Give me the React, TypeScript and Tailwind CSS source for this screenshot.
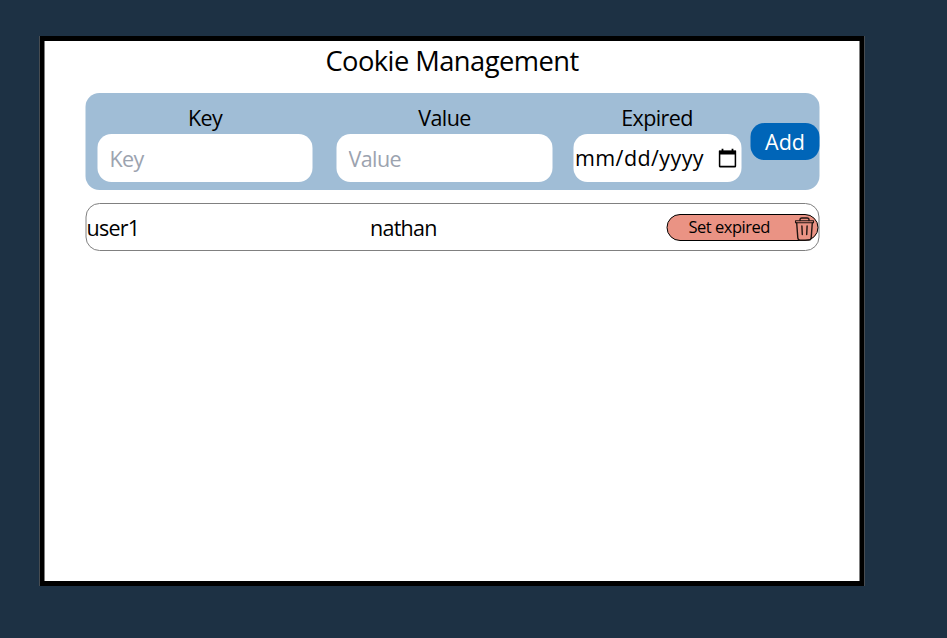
const Calendar = () => (
  <svg className="h-[20px] w-[18px] shrink-0" viewBox="0 0 18 20" fill="none">
    <path d="M1 3.5h16v14.2a1 1 0 0 1-1 1H2a1 1 0 0 1-1-1z" stroke="#000" strokeWidth="1.7" />
    <path d="M0.5 2.5h17v4.1H0.5z" fill="#000" />
    <path d="M4 0.8v3M14 0.8v3" stroke="#000" strokeWidth="1.8" />
  </svg>
);

const Trash = () => (
  <svg
    className="mt-[3px] h-[24px] w-[20px] shrink-0"
    viewBox="0 0 20 24"
    fill="none"
    stroke="#201512"
    strokeWidth="1.4"
    strokeLinecap="round"
    strokeLinejoin="round"
  >
    <path d="M1 3.8h18v2H1z" strokeWidth="1.1" />
    <path d="M5.5 3.6V2.8Q5.5 1 7.3 1h5.4q1.8 0 1.8 1.8v.8" />
    <path d="M2.2 6l1.1 14.7q.2 2.4 2.3 2.4h8.8q2.1 0 2.3-2.4L17.8 6" />
    <path d="M7.4 9l.4 8.5M12.6 9l-.4 8.5" />
  </svg>
);

export default function App() {
  return (
    <main className="h-[638px] overflow-hidden bg-[#1d3144] pt-[36px] pl-[40px] font-['Open_Sans','Noto_Sans',sans-serif] text-black">
      <section className="flex h-[550px] w-[825px] translate-x-[-0.5px] flex-col border-5 border-black bg-white">
        <h1 className="mt-px h-[38px] text-center text-[27.3px] leading-[37px] tracking-[-0.55px] whitespace-nowrap">
          Cookie Management
        </h1>

        <form className="mt-[13px] ml-[41px] flex h-[97px] w-[734px] shrink-0 rounded-[14px] bg-[#a0bdd6] pl-[12px] text-[21.5px] tracking-[-0.6px]">
          <label className="mt-[10px] flex w-[215px] flex-col">
            <span className="h-[31px] text-center leading-[29px]">Key</span>
            <input
              placeholder="Key"
              className="h-[48px] w-full rounded-[14px] bg-white px-[12px] pt-px outline-none placeholder:text-[#9ca3af]"
            />
          </label>
          <label className="mt-[10px] ml-[24px] flex w-[216px] flex-col">
            <span className="h-[31px] text-center leading-[29px]">Value</span>
            <input
              placeholder="Value"
              className="h-[48px] w-full rounded-[14px] bg-white px-[12px] pt-px outline-none placeholder:text-[#9ca3af]"
            />
          </label>
          <div className="mt-[10px] ml-[20.5px] flex w-[168px] flex-col">
            <span className="h-[31px] text-center leading-[29px]">Expired</span>
            <div className="flex h-[48px] items-center justify-between rounded-[14px] bg-white pr-[5px] pl-[2px]">
              <span className="pt-px tracking-[0.4px] whitespace-nowrap">mm/dd/yyyy</span>
              <Calendar />
            </div>
          </div>
          <button
            type="button"
            className="mt-[30px] ml-auto h-[37px] w-[69px] rounded-[14px] bg-[#0065b8] text-center leading-[37px] tracking-[0px] text-white"
          >
            Add
          </button>
        </form>

        <div className="mt-[13px] ml-[41px] flex h-[48px] w-[734px] shrink-0 items-center rounded-[14px] border border-[#808080] text-[21.5px] tracking-[-0.75px]">
          <span className="w-[283.5px] pt-[3px]">user1</span>
          <span className="pt-[3px]">nathan</span>
          <div className="ml-auto flex h-[27px] w-[152px] items-center justify-between rounded-full border border-black bg-[#ea9384] pr-[3.5px] pl-[21px]">
            <span className="pb-px text-[16.5px] leading-[24px] tracking-[-0.5px] whitespace-nowrap">Set expired</span>
            <Trash />
          </div>
        </div>
      </section>
    </main>
  );
}
